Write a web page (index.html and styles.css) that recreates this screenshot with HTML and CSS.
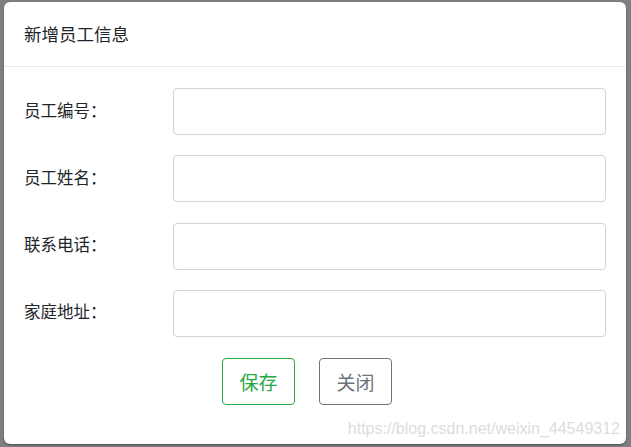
FILE: index.html
```html
<!DOCTYPE html>
<html lang="zh-CN">
<head>
    <meta charset="UTF-8">
    <title>新增员工信息</title>
    <link rel="stylesheet" href="styles.css">
</head>
<body>
<div class="backdrop">
    <div class="modal">
        <div class="modal__header">
            <h5 class="modal__title">新增员工信息</h5>
        </div>
        <div class="modal__body">
            <div class="form__row">
                <label class="form__label">员工编号：</label>
                <input class="form__input" type="text">
            </div>
            <div class="form__row">
                <label class="form__label">员工姓名：</label>
                <input class="form__input" type="text">
            </div>
            <div class="form__row">
                <label class="form__label">联系电话：</label>
                <input class="form__input" type="text">
            </div>
            <div class="form__row">
                <label class="form__label">家庭地址：</label>
                <input class="form__input" type="text">
            </div>
            <div class="form__actions">
                <button class="btn btn--save">保存</button>
                <button class="btn btn--close">关闭</button>
            </div>
        </div>
        <div class="watermark">https://blog.csdn.net/weixin_44549312</div>
    </div>
</div>
</body>
</html>
```

FILE: styles.css
```css
body, html {
    margin: 0;
    height: 100%;
    background-color: #7f7f7f;
    font-family: "Noto Sans CJK SC", "Noto Sans", sans-serif;
    color: #212529;
}

.backdrop {
    padding: 2px 0 0 4px;
}

.modal {
    position: relative;
    width: 622px;
    height: 442px;
    box-sizing: border-box;
    background-color: #fff;
    border-radius: 6px;
    box-shadow: 0 1px 2px rgba(0, 0, 0, 0.4);
}

.modal__header {
    height: 65px;
    box-sizing: border-box;
    padding: 0 20px;
    display: flex;
    align-items: center;
    border-bottom: 1px solid #e9ecef;
}

.modal__title {
    margin: 0;
    font-size: 17.5px;
    font-weight: normal;
    padding-bottom: 2px;
}

.modal__body {
    padding: 21px 20px 0 20px;
    display: flex;
    flex-direction: column;
    gap: 20.3px;
}

.form__row {
    display: flex;
    align-items: center;
}

.form__label {
    width: 149px;
    font-size: 16.5px;
    padding-bottom: 4px;
}

.form__input {
    flex: 1;
    height: 47px;
    box-sizing: border-box;
    border: 1px solid #ced4da;
    border-radius: 4px;
    background-color: #fff;
    margin: 0;
}

.form__actions {
    display: flex;
    gap: 24px;
    padding-left: 198px;
    margin-top: 1px;
}

.btn {
    width: 73px;
    height: 47px;
    background-color: #fff;
    border-radius: 4px;
    font-family: "Noto Sans CJK SC", sans-serif;
    font-size: 19px;
    padding: 0;
    cursor: pointer;
}

.btn--save {
    border: 1px solid #28a745;
    color: #28a745;
}

.btn--close {
    border: 1px solid #6c757d;
    color: #6c757d;
}

.watermark {
    position: absolute;
    right: 6px;
    bottom: 6px;
    font-family: "Liberation Sans", Arial, sans-serif;
    font-size: 16px;
    color: rgba(200, 200, 200, 0.65);
}
```
